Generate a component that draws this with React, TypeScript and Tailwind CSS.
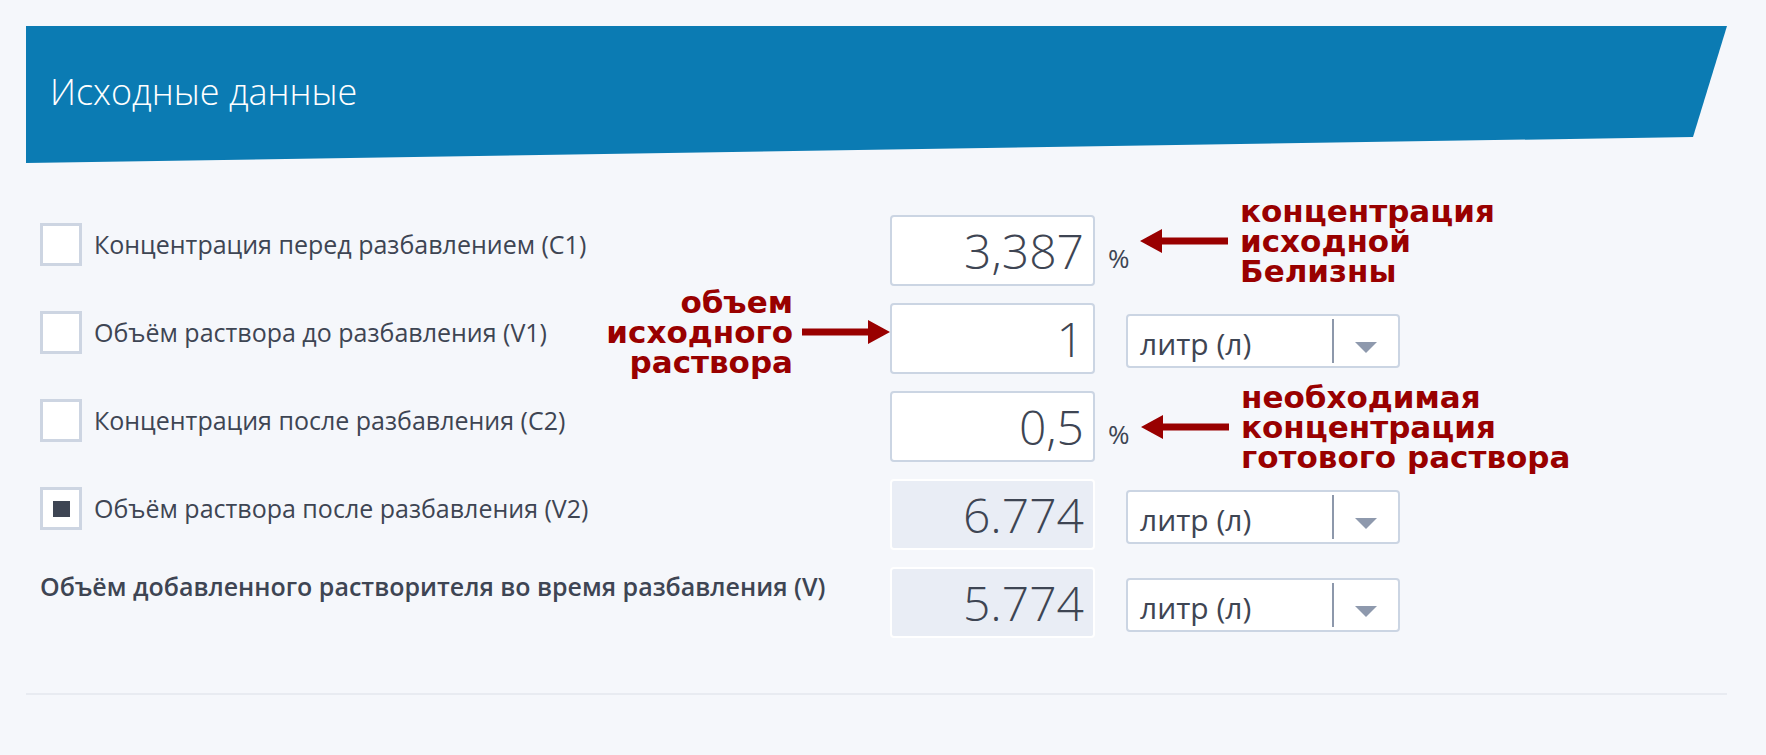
import React from "react";

type Note = { lines: string[]; top: number; left?: number };

type Row = {
  label: string;
  check?: "off" | "on";
  value: string;
  readOnly?: boolean;
  unit: "%" | "select";
  noteRight?: Note;
  noteLeft?: Note;
};

const rows: Row[] = [
  {
    label: "Концентрация перед разбавлением (С1)",
    check: "off",
    value: "3,387",
    unit: "%",
    noteRight: { lines: ["концентрация", "исходной", "Белизны"], top: -19, left: 45 },
  },
  {
    label: "Объём раствора до разбавления (V1)",
    check: "off",
    value: "1",
    unit: "select",
    noteLeft: { lines: ["объем", "исходного", "раствора"], top: -16 },
  },
  {
    label: "Концентрация после разбавления (С2)",
    check: "off",
    value: "0,5",
    unit: "%",
    noteRight: { lines: ["необходимая", "концентрация", "готового раствора"], top: -9, left: 46 },
  },
  {
    label: "Объём раствора после разбавления (V2)",
    check: "on",
    value: "6.774",
    readOnly: true,
    unit: "select",
  },
  {
    label: "Объём добавленного растворителя во время разбавления (V)",
    value: "5.774",
    readOnly: true,
    unit: "select",
  },
];

function Arrow({ dir }: { dir: "left" | "right" }) {
  return (
    <svg width="88" height="24" viewBox="0 0 88 24" className="shrink-0">
      {dir === "left" ? (
        <polygon points="0,12 22,0 22,8.5 88,8.5 88,15.5 22,15.5 22,24" fill="#990000" />
      ) : (
        <polygon points="88,12 66,0 66,8.5 0,8.5 0,15.5 66,15.5 66,24" fill="#990000" />
      )}
    </svg>
  );
}

function NoteText({ lines, align }: { lines: string[]; align: "left" | "right" }) {
  return (
    <div
      className={`font-['DejaVu_Sans',sans-serif] font-bold text-[31px] leading-[30px] text-[#990000] whitespace-nowrap ${
        align === "right" ? "text-right" : "text-left"
      }`}
    >
      {lines.map((l) => (
        <div key={l}>{l}</div>
      ))}
    </div>
  );
}

function Select() {
  return (
    <div className="ml-[31px] mt-[11px] flex h-[54px] w-[274px] rounded-[4px] border-2 border-[#cbd5e3] bg-white">
      <div className="flex flex-1 items-end pb-[7px] pl-[12px] text-[30px] leading-none text-[#3e4553]">
        литр (л)
      </div>
      <div className="my-[3px] w-[2px] bg-[#8d98ab]" />
      <div className="flex w-[64px] items-center justify-center pt-[13px]">
        <svg width="22" height="11" viewBox="0 0 22 11">
          <polygon points="0,0 22,0 11,11" fill="#8e99ad" />
        </svg>
      </div>
    </div>
  );
}

export default function App() {
  return (
    <div className="min-h-screen bg-[#f5f7fb] pl-[26px] pr-[39px] pt-[26px] font-['Open_Sans',sans-serif]">
      <div className="h-[137px] bg-[#0b7bb3] pl-[24px] pt-[48px] [clip-path:polygon(0_0,100%_0,calc(100%-34px)_111px,0_100%)]">
        <h1 className="text-[36px] font-light leading-none text-white">Исходные данные</h1>
      </div>

      <div className="flex flex-col gap-[17px] pl-[14px] pt-[52px]">
        {rows.map((r) => (
          <div key={r.label} className="flex h-[71px] items-start">
            <div className="relative w-[850px] shrink-0">
              {r.check ? (
                <div className="mt-[8px] flex items-center">
                  <div className="flex h-[43px] w-[42px] items-center justify-center border-[3px] border-[#cdd5e2] bg-white">
                    {r.check === "on" && <div className="h-[16px] w-[17px] bg-[#3e4553]" />}
                  </div>
                  <span className="ml-[12px] text-[25px] leading-[43px] text-[#3e4553]">{r.label}</span>
                </div>
              ) : (
                <div className="pt-[2px] text-[25px] font-semibold leading-[34px] text-[#3e4553]">{r.label}</div>
              )}
              {r.noteLeft && (
                <div className="absolute right-0 flex items-center gap-[9px]" style={{ top: r.noteLeft.top }}>
                  <NoteText lines={r.noteLeft.lines} align="right" />
                  <Arrow dir="right" />
                </div>
              )}
            </div>

            <div
              className={`flex h-[71px] w-[205px] shrink-0 items-center justify-end rounded-[4px] border-2 pr-[9px] text-[48px] font-light leading-none text-[#3e4553] ${
                r.readOnly ? "border-white bg-[#e9edf5]" : "border-[#cbd5e3] bg-white"
              }`}
            >
              {r.value}
            </div>

            <div className="relative flex h-[71px]">
              {r.unit === "%" ? (
                <span className="ml-[13px] self-end mb-[15px] text-[26px] leading-none text-[#3e4553]">%</span>
              ) : (
                <Select />
              )}
              {r.noteRight && (
                <div
                  className="absolute flex items-center gap-[12px]"
                  style={{ top: r.noteRight.top, left: r.noteRight.left }}
                >
                  <Arrow dir="left" />
                  <NoteText lines={r.noteRight.lines} align="left" />
                </div>
              )}
            </div>
          </div>
        ))}
      </div>

      <div className="mt-[55px] h-[2px] bg-[#e8ebf1]" />
    </div>
  );
}
